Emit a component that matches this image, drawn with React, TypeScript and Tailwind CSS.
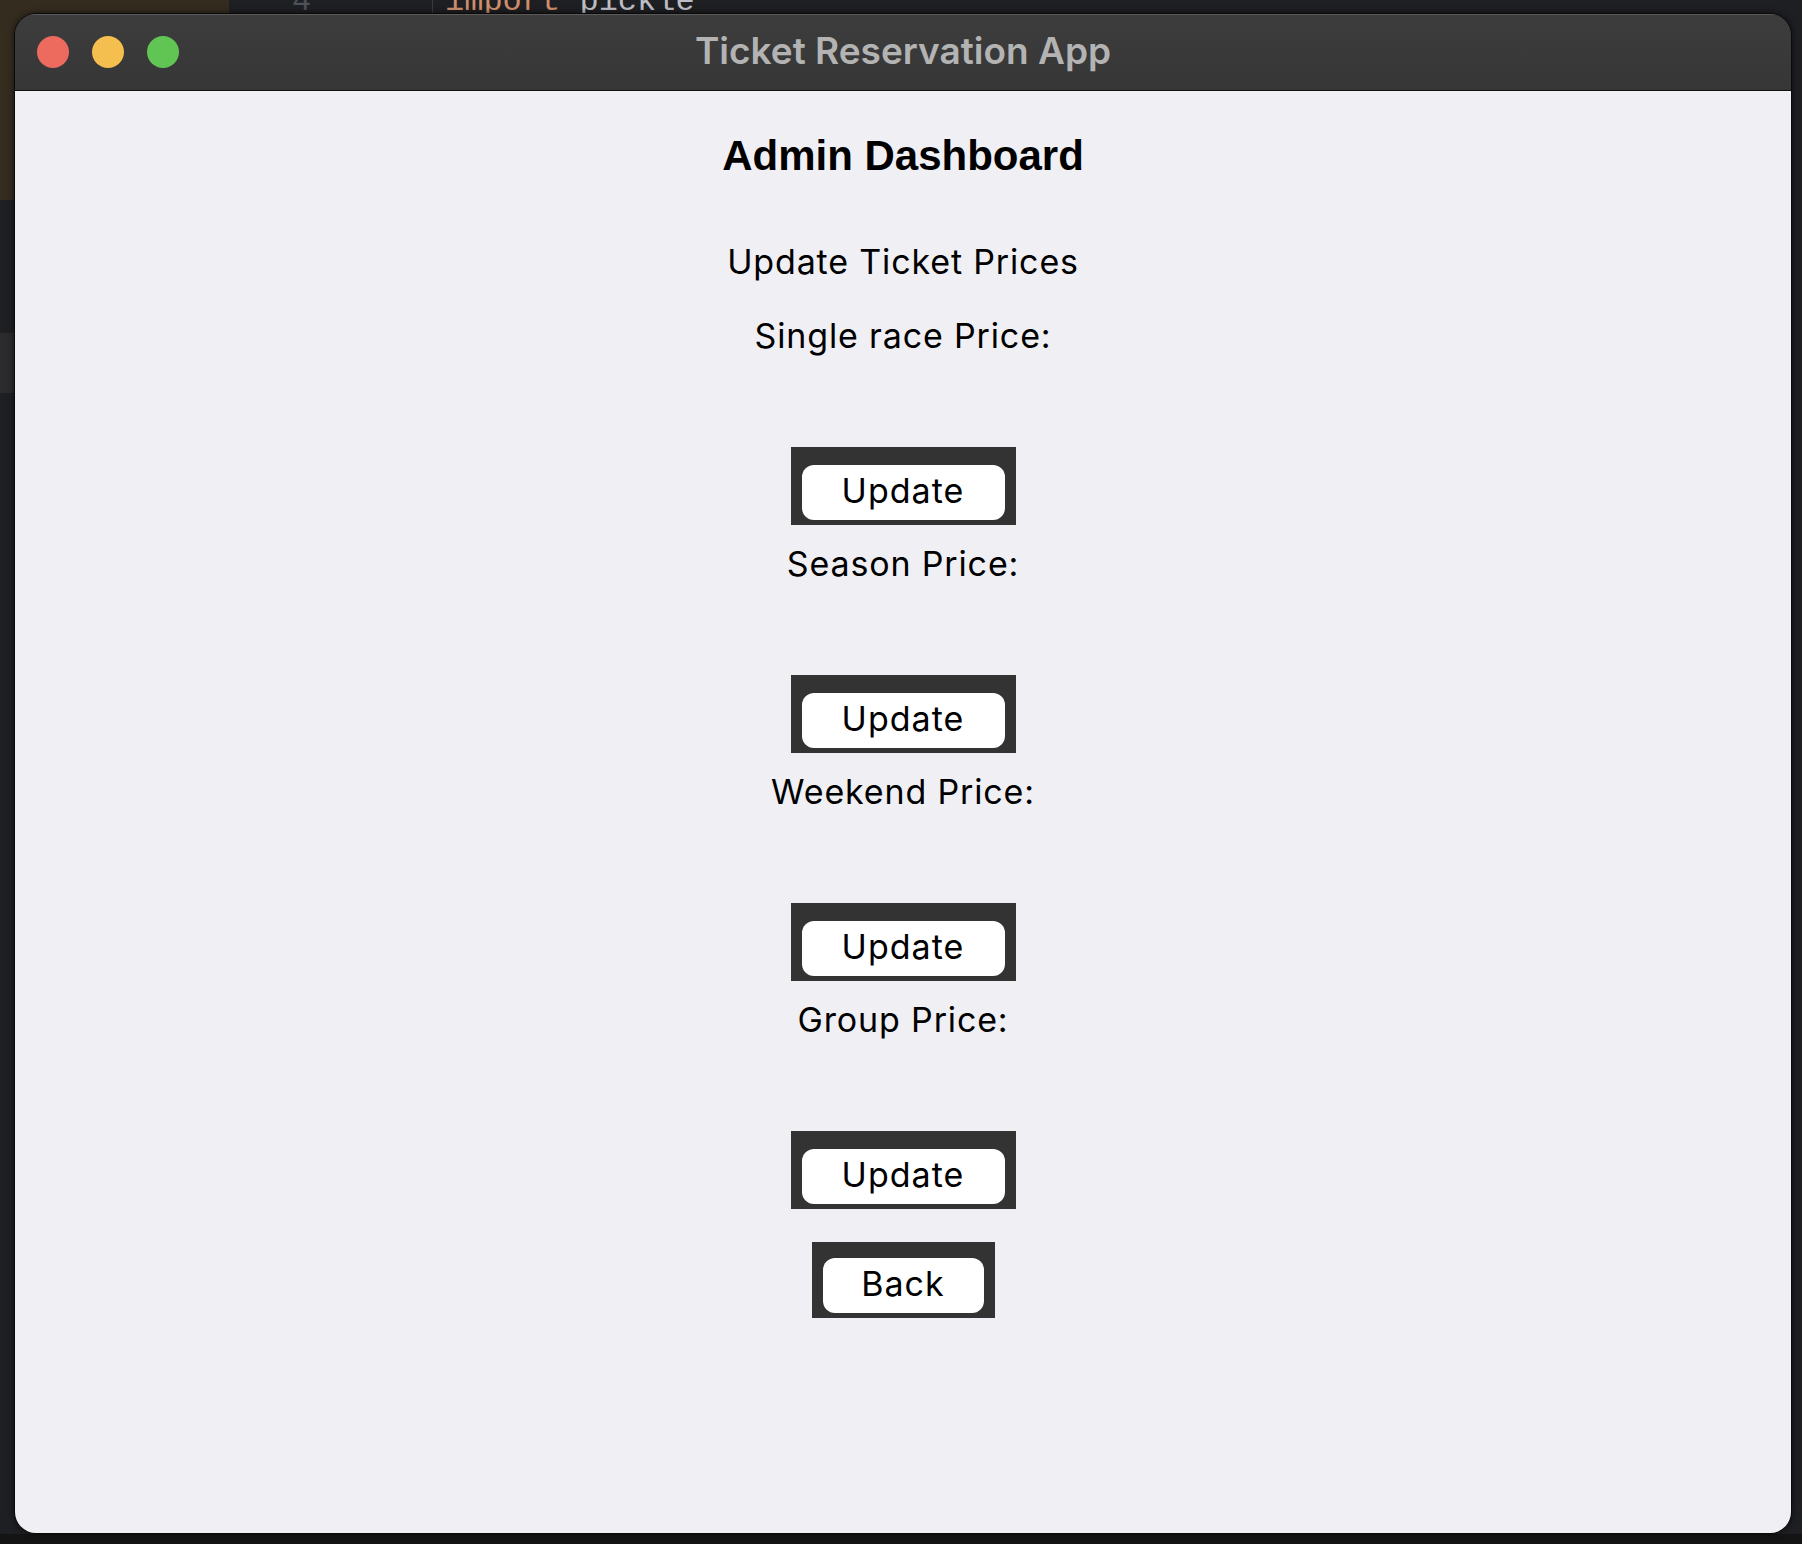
import React from "react";

const ROWS = ["Single race Price:", "Season Price:", "Weekend Price:", "Group Price:"];

const sans = { fontFamily: "Inter, 'Noto Sans', sans-serif" };

function Lights() {
  return (
    <div className="flex items-center gap-[23px] pl-[22px]">
      <span className="w-[32px] h-[32px] rounded-full bg-[#ec6a5e]" />
      <span className="w-[32px] h-[32px] rounded-full bg-[#f4bf4f]" />
      <span className="w-[32px] h-[32px] rounded-full bg-[#61c554]" />
    </div>
  );
}

function FramedButton({ label, width, top }: { label: string; width: string; top: string }) {
  return (
    <div className={`bg-[#333333] pl-[11px] pr-[11px] pb-[5px] ${top}`}>
      <button
        className={`${width} h-[55px] rounded-[12px] bg-white text-black text-[34px] leading-none tracking-[0.03em] flex items-center justify-center pb-[3px]`}
        style={sans}
      >
        {label}
      </button>
    </div>
  );
}

export default function App() {
  return (
    <div className="relative w-[1802px] h-[1544px] overflow-hidden bg-[#1e1f22] pt-[13px] pl-[14px]">
      {/* editor behind the window */}
      <div className="absolute left-0 top-0 w-[229px] h-[200px] bg-[#352c20]" />
      <div className="absolute left-0 top-[333px] w-[229px] h-[60px] bg-[#2b2b2e]" />
      <div className="absolute left-[432px] top-0 w-px h-[14px] bg-[#393b40]" />
      <div className="absolute left-0 top-[1534px] w-[1802px] h-[10px] bg-[#141414]" />
      <div className="absolute left-[292px] top-[-14px] text-[32px] leading-[32px] text-[#4b5059]" style={{ fontFamily: "'Liberation Mono', monospace" }}>
        4
      </div>
      <div className="absolute left-[445px] top-[-14px] text-[32px] leading-[32px] whitespace-pre" style={{ fontFamily: "'Liberation Mono', monospace" }}>
        <span className="text-[#cf8e6d]">import</span>
        <span className="text-[#bcbec4]"> pickle</span>
      </div>

      {/* window */}
      <div className="relative w-[1778px] h-[1521px] rounded-[22px] overflow-hidden border border-[#0a0a0a] flex flex-col shadow-[0_0_6px_rgba(0,0,0,0.6)]">
        <div className="h-[77px] shrink-0 grid grid-cols-[1fr_auto_1fr] items-center bg-gradient-to-b from-[#3d3d3d] to-[#363636] border-b border-[#111111] shadow-[inset_0_1px_0_#5a5a5a]">
          <Lights />
          <div className="text-[37px] leading-none font-semibold text-[#b3b3b3] pb-[4px]" style={sans}>
            Ticket Reservation App
          </div>
          <div />
        </div>

        <div className="flex-1 bg-[#f0eff4] flex flex-col items-center">
          <h1
            className="mt-[41px] text-[42px] leading-[48px] font-bold text-black"
            style={{ fontFamily: "'Liberation Sans', Arial, sans-serif" }}
          >
            Admin Dashboard
          </h1>
          <p className="mt-[62px] text-[34px] leading-[40px] tracking-[0.025em] text-black" style={sans}>
            Update Ticket Prices
          </p>

          {ROWS.map((row, i) => (
            <React.Fragment key={row}>
              <p
                className={`${i === 0 ? "mt-[34px]" : "mt-[19px]"} text-[34px] leading-[40px] tracking-[0.025em] text-black`}
                style={sans}
              >
                {row}
              </p>
              <div className="mt-[91px]">
                <FramedButton label="Update" width="w-[203px]" top="pt-[18px]" />
              </div>
            </React.Fragment>
          ))}

          <div className="mt-[33px]">
            <FramedButton label="Back" width="w-[161px]" top="pt-[16px]" />
          </div>
        </div>
      </div>
    </div>
  );
}
